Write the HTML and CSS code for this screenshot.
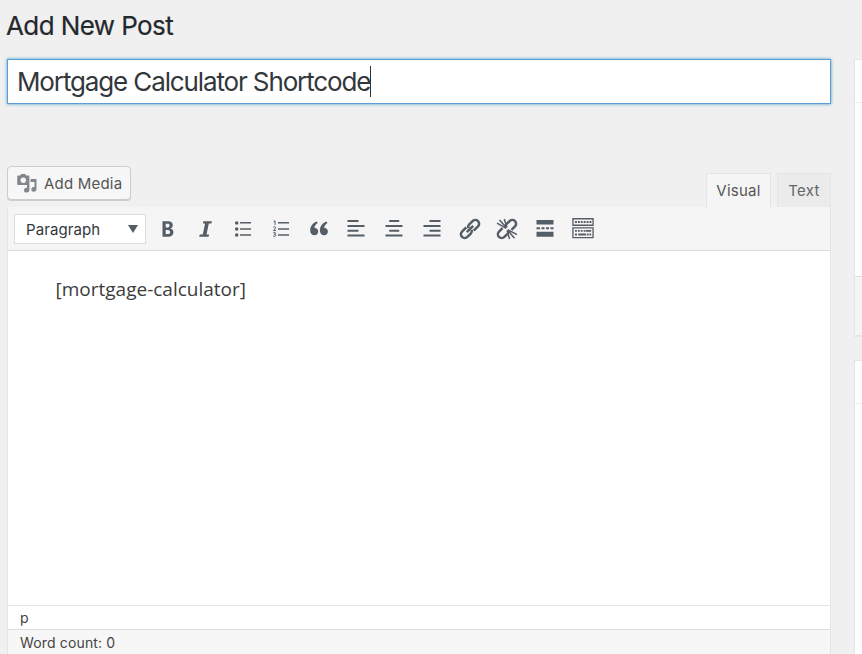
FILE: index.html
```
<!DOCTYPE html>
<html lang="en">
<head>
<meta charset="utf-8">
<title>Add New Post</title>
<link rel="stylesheet" href="styles.css">
</head>
<body>
<div class="page">
  <main class="main">
    <h1 class="heading"><span>Add New Post</span></h1>
    <div class="title-field"><span class="title-text">Mortgage Calculator Shortcode</span><span class="caret"></span></div>
    <div class="tools">
      <button class="media-btn">
        <svg width="20" height="20" viewBox="0 0 20 20" fill="#82878c"><path fill-rule="evenodd" d="M1.500 2.500h1.700l1-1.500h4l1 1.500h2.200c.6 0 1 .4 1 1V11c0 .6-.4 1-1 1H1.200c-.6 0-1-.4-1-1V3.500c0-.6.4-1 1-1zM6.300 4.500a2.700 2.700 0 1 0 0 5.400 2.700 2.700 0 0 0 0-5.400z"/><path d="M13.500 6H19.500V16.300a2.600 2.300 0 1 1-2-2.200V9h-4zM10 11.500h2.400V17a2.700 2.400 0 1 1-2.400-2.300z"/></svg>
        <span>Add Media</span>
      </button>
      <div class="tabs">
        <div class="tab active"><span>Visual</span></div>
        <div class="tab"><span>Text</span></div>
      </div>
    </div>
    <section class="editor">
      <div class="toolbar">
        <div class="select"><span>Paragraph</span><i class="arrow"></i></div>
        <div class="icons">
          <svg viewBox="0 0 24 24"><path fill-rule="evenodd" d="M6.500 4.200h5.600c3 0 4.700 1.400 4.700 3.900 0 1.800-.9 3-2.300 3.400 1.800.4 2.900 1.700 2.900 3.700 0 2.800-2 4.500-5.200 4.500H6.500zM9.700 6.800v3.600h2c1.300 0 1.900-.6 1.900-1.800s-.7-1.800-2-1.800zm0 6.100v4.200h2.200c1.500 0 2.200-.7 2.200-2.100s-.8-2.100-2.300-2.100z"/></svg>
          <svg viewBox="0 0 24 24"><path d="M9.400 4.200h8.500l-.5 2.300h-2.600l-2.300 10.900h2.600l-.5 2.300H5.200l.5-2.300h3.100l2.300-10.900H8.900z"/></svg>
          <svg viewBox="0 0 24 24"><circle cx="5.700" cy="6" r="1.800"/><circle cx="5.700" cy="12" r="1.800"/><circle cx="5.700" cy="18" r="1.800"/><path d="M9 5h11v1.600H9zM9 11.200h11v1.600H9zM9 17.200h11v1.600H9z"/></svg>
          <svg viewBox="0 0 24 24"><path d="M9 5h11v1.600H9zM9 11.200h11v1.600H9zM9 17.200h11v1.600H9z"/><path d="M4.700 4.500L6 3.700V8M4.300 10.200c1-.8 2.700-.4 2.300.7L4.400 13.600h2.700M4.300 15.800c1.100-.6 2.500-.3 2.300.6-.1.800-1.500.8-1.500.8s1.700 0 1.700 1c0 1.200-1.700 1.300-2.700.8" fill="none" stroke="#555d66" stroke-width="1"/></svg>
          <svg viewBox="0 0 24 24"><path d="M9.800 4.600l.9 1.400C8.300 7.500 7.500 9.200 7.500 11c2-.3 3.700 1.200 3.700 3.400 0 2.300-1.600 3.900-3.700 3.900-2.500 0-4.300-1.900-4.300-4.900 0-3.900 2.600-7.400 6.600-8.800zM19.500 4.600l.9 1.400c-2.400 1.500-3.200 3.200-3.200 5 2-.3 3.700 1.200 3.700 3.400 0 2.300-1.600 3.900-3.700 3.900-2.500 0-4.300-1.900-4.300-4.900 0-3.900 2.600-7.400 6.600-8.800z"/></svg>
          <svg viewBox="0 0 24 24"><path d="M3.500 3h11v2h-11zM3.500 8h17v2h-17zM3.500 12.700h11v2h-11zM3.500 17.500h17v2h-17z"/></svg>
          <svg viewBox="0 0 24 24"><path d="M7.200 3h10v2h-10zM3.500 8h17v2h-17zM7.200 12.700h10v2h-10zM3.500 17.500h17v2h-17z"/></svg>
          <svg viewBox="0 0 24 24"><path d="M9.500 3h11v2h-11zM3.500 8h17v2h-17zM9.500 12.700h11v2h-11zM3.500 17.500h17v2h-17z"/></svg>
          <svg viewBox="0 0 24 24"><g transform="rotate(-45 12 12)" fill="none" stroke="#555d66" stroke-width="2.500"><path d="M10.500 8.200H4.500a3.800 3.800 0 0 0 0 7.600h4.800a3.800 3.800 0 0 0 3.300-2M13.500 15.800h6a3.800 3.800 0 0 0 0-7.600h-4.800a3.800 3.800 0 0 0-3.300 2M7.500 12h9"/></g></svg>
          <svg viewBox="0 0 24 24"><g fill="none" stroke="#555d66"><g transform="rotate(-45 12 12)" stroke-width="2.500"><path d="M9.500 8.200H4.500a3.800 3.800 0 0 0 0 7.600h4.800a3.800 3.800 0 0 0 2.600-1.200M14.500 15.800h5a3.800 3.800 0 0 0 0-7.600h-4.800a3.800 3.800 0 0 0-2.600 1.200"/></g><path d="M11.300 11.300L2 6.200M11.500 10.800L4.500 3M12 10.500L9.300 2M12.700 12.700l9.300 5M12.500 13l7 8.200M12 13.500l2.600 8.500" stroke-width="1.500"/></g></svg>
          <svg viewBox="0 0 24 24"><path d="M3.500 3h17v4.500h-17zM3.500 10.200h3.500v2h-3.500zM8.500 10.200h3v2h-3zM13 10.200h3v2h-3zM17.500 10.200h3v2h-3zM3.500 14.700h17v5h-17z"/></svg>
          <svg viewBox="0 0 24 24"><path fill-rule="evenodd" d="M1.300 1h21.400v8H1.300zm1.300 1.400v5.200h18.800V2.400zM1.300 10.200h21.400v11H1.300zm1.300 1.300v8.400h18.800v-8.400z"/><path d="M4 5h16.500" stroke="#555d66" stroke-width="2" stroke-dasharray="1.900 1"/><path d="M4 13.900h10" stroke="#555d66" stroke-width="1.800" stroke-dasharray="1.900 1"/><path d="M14.500 13h5.700v1.800h-5.700zM4 16.500h2v2H4zM7.200 16.500h8v2h-8zM16 16.500h1.700v2H16zM18.500 16.500h1.700v2h-1.700z"/></svg>
        </div>
      </div>
      <div class="content"><span>[mortgage-calculator]</span></div>
      <div class="path"><span>p</span></div>
      <div class="status"><span>Word count: 0</span></div>
    </section>
  </main>
  <aside class="side">
    <div class="box first"><div class="box-head"></div><div class="box-body"></div><div class="box-foot"></div></div>
    <div class="box second"><div class="box-head"></div></div>
  </aside>
</div>
</body>
</html>
```
FILE: styles.css
```
* { box-sizing: border-box; }
body { margin: 0; background: #f0f0f0; color: #444; font-family: Inter, "Liberation Sans", sans-serif; overflow: hidden; }
.page { display: flex; width: 862px; height: 654px; gap: 24px; padding-left: 7px; overflow: hidden; }
.main { width: 824px; flex: none; display: flex; flex-direction: column; }
.heading { margin: 0 0 0 -1px; height: 59px; flex: none; padding-top: 10px; font-size: 26px; line-height: 32px; font-weight: 400; color: #23282d; letter-spacing: -0.6px; -webkit-text-stroke: 0.2px; }
.title-field { height: 45px; flex: none; border: 1px solid #5b9dd9; background: #fff; box-shadow: 0 0 3px rgba(30,140,190,.8); display: flex; align-items: center; padding-left: 9px; font-size: 26px; color: #32373c; }
.title-text { letter-spacing: -1.13px; white-space: nowrap; }
.caret { width: 1px; height: 31px; background: #333; }
.tools { height: 103px; flex: none; display: flex; justify-content: space-between; padding-top: 62px; }
.media-btn { width: 124px; height: 34px; display: flex; align-items: center; gap: 7px; padding: 0 0 0 9px; background: #f7f7f7; border: 1px solid #ccc; border-radius: 4px; box-shadow: 0 1px 0 #ccc; font: 400 15px Inter, sans-serif; letter-spacing: 0.2px; color: #555; white-space: nowrap; }
.media-btn svg { flex: none; }
.tabs { display: flex; gap: 6px; padding-top: 7px; }
.tab { height: 35px; width: 54px; border: 1px solid #e5e5e5; background: #ebebeb; display: flex; justify-content: center; align-items: center; font-size: 15px; font-weight: 400; letter-spacing: 0.25px; color: #666; }
.tab.active { width: 65px; background: #f5f5f5; border-bottom: 0; padding-bottom: 1px; color: #555; position: relative; z-index: 1; }
.editor { flex: 1; display: flex; flex-direction: column; border: solid #e5e5e5; border-width: 0 1px; background: #fff; }
.toolbar { height: 44px; flex: none; display: flex; align-items: center; background: #f5f5f5; border-bottom: 1px solid #ddd; padding-left: 6px; }
.select { width: 132px; height: 30px; border: 1px solid #ddd; background: #fff; display: flex; align-items: center; justify-content: space-between; padding: 1px 7px 0 11px; font-size: 15px; letter-spacing: 0.1px; color: #32373c; }
.arrow { border: solid transparent; border-width: 8px 5px 0; border-top-color: #555d66; }
.icons { display: flex; gap: 13.7px; margin-left: 10px; padding-top: 1px; }
.icons svg { width: 24px; height: 24px; fill: #555d66; flex: none; }
.content { height: 354px; flex: none; padding: 25px 0 0 47.5px; font: 400 19px/27px "Open Sans", sans-serif; color: #3c3c3c; }
.path { height: 25px; flex: none; border-top: 1px solid #e5e5e5; border-bottom: 1px solid #dedede; padding-left: 12px; font-size: 14px; line-height: 24px; }
.status { flex: 1; background: #f7f7f7; padding-left: 12px; font-size: 14px; letter-spacing: 0.15px; line-height: 25px; }
.side { flex: 1; padding-top: 59px; margin-left: -1px; }
.box { width: 40px; border: 1px solid #e5e5e5; background: #fff; box-shadow: 0 1px 1px rgba(0,0,0,.04); }
.box-head { height: 43px; border-bottom: 1px solid #eee; }
.first { height: 277px; margin-bottom: 24px; }
.box-body { height: 173px; }
.box-foot { height: 59px; border-top: 1px solid #ddd; background: #f5f5f5; }
.second { height: 400px; }
```
